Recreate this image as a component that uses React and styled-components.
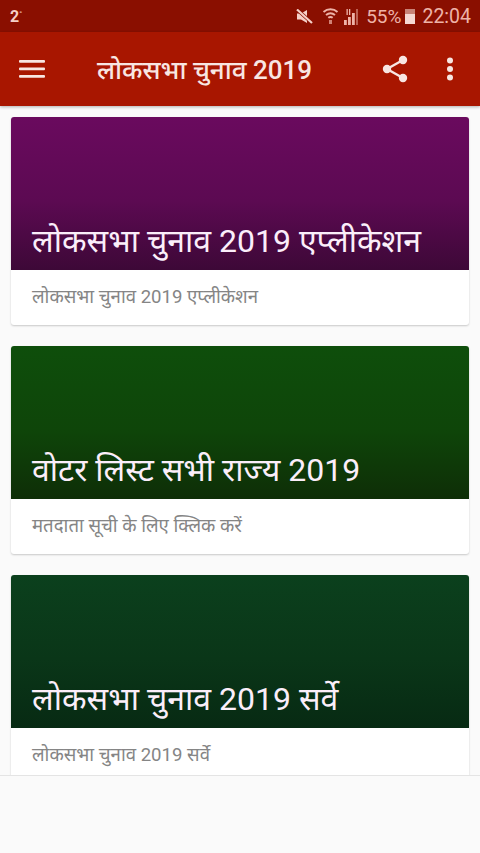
import React from 'react';
import styled, { createGlobalStyle } from 'styled-components';

const GlobalStyle = createGlobalStyle`
  html, body { margin: 0; padding: 0; background: #fafafa; }
  body { font-family: Roboto, "Noto Sans", "Noto Sans Devanagari", sans-serif; }
`;

const cards = [
  { title: 'लोकसभा चुनाव 2019 एप्लीकेशन', text: 'लोकसभा चुनाव 2019 एप्लीकेशन', top: '#6a0a5e', mid: '#5c0a52', bottom: '#3d0837' },
  { title: 'वोटर लिस्ट सभी राज्य 2019', text: 'मतदाता सूची के लिए क्लिक करें', top: '#0e4e0b', mid: '#0e4509', bottom: '#0e2e07' },
  { title: 'लोकसभा चुनाव 2019 सर्वे', text: 'लोकसभा चुनाव 2019 सर्वे', top: '#0b401d', mid: '#0a3618', bottom: '#072a13' },
];

const App = () => {
  return (
    <>
      <GlobalStyle />
      <Screen>
        <StatusBar>
          <Temp>2<sup>°</sup></Temp>
          <StatusRight>
            <svg width="17" height="15" viewBox="0 0 17 15">
              <path d="M1 4.500h4L11 1v13L5 10.500H1z" fill="#f5cfc7" />
              <path d="M1.500 1l14.500 13" stroke="#8a0f00" strokeWidth="3.400" />
              <path d="M1 0.500l15 13.500" stroke="#f5cfc7" strokeWidth="2.200" />
            </svg>
            <WifiIcon width="17" height="18" viewBox="0 0 17 18" fill="none" stroke="#eeb3a8" strokeWidth="1.900">
              <path d="M1.500 5c4-3.600 10-3.600 14 0" />
              <path d="M4 8c2.800-2.300 6.200-2.300 9 0" />
              <path d="M6.300 10.800c1.300-1 3.100-1 4.400 0" />
              <path d="M8.500 13v4" opacity=".7" strokeWidth="3" />
            </WifiIcon>
            <svg width="16" height="17" viewBox="0 0 16 17" fill="#eeb3a8">
              <rect x="1" y="12" width="2.800" height="5" />
              <rect x="5" y="9" width="2.800" height="8" />
              <rect x="9" y="5" width="2.800" height="12" />
              <rect x="13" y="1" width="2" height="16" opacity=".5" />
              <rect x="3.500" y="1" width="1.300" height="6" />
              <rect x="6" y="1" width="1.300" height="6" />
            </svg>
            <Percent>55%</Percent>
            <Battery />
            <Clock>22:04</Clock>
          </StatusRight>
        </StatusBar>
        <Toolbar>
          <IconSlot>
            <svg width="26" height="18" viewBox="0 0 26 18" fill="#f8e6e2">
              <rect y="0" width="26" height="2.800" rx="1" />
              <rect y="7.500" width="26" height="2.800" rx="1" />
              <rect y="15" width="26" height="2.800" rx="1" />
            </svg>
          </IconSlot>
          <Title>लोकसभा चुनाव 2019</Title>
          <ShareSlot>
            <svg width="26" height="28" viewBox="0 0 26 28" fill="#f8e6e2">
              <circle cx="21" cy="5" r="4.200" />
              <circle cx="5" cy="14" r="4.200" />
              <circle cx="21" cy="23" r="4.200" />
              <path d="M21 5L5 14l16 9" fill="none" stroke="#f8e6e2" strokeWidth="2.400" />
            </svg>
          </ShareSlot>
          <MoreSlot>
            <svg width="8" height="24" viewBox="0 0 8 24" fill="#f8e6e2">
              <circle cx="4" cy="3.500" r="3" />
              <circle cx="4" cy="12" r="3" />
              <circle cx="4" cy="20.500" r="3" />
            </svg>
          </MoreSlot>
        </Toolbar>
        <List>
          {cards.map((card) => (
            <Card key={card.title}>
              <Banner $top={card.top} $mid={card.mid} $bottom={card.bottom}>
                <BannerTitle>{card.title}</BannerTitle>
              </Banner>
              <CardText>{card.text}</CardText>
            </Card>
          ))}
        </List>
        <Footer />
      </Screen>
    </>
  );
};

export default App;

const Screen = styled.div`
  width: 480px;
  height: 853px;
  display: flex;
  flex-direction: column;
  overflow: hidden;
  background: #fafafa;
`;

const StatusBar = styled.div`
  height: 32px;
  flex: none;
  display: flex;
  align-items: center;
  justify-content: space-between;
  padding: 0 9px 0 10px;
  background: #8a0f00;
`;

const Temp = styled.span`
  font-size: 16px;
  font-weight: 700;
  color: #f5cfc7;
  sup { font-size: 8px; font-weight: 400; line-height: 0; }
`;

const StatusRight = styled.div`
  display: flex;
  align-items: center;
  gap: 4px;
  color: #eeb3a8;
`;

const WifiIcon = styled.svg`
  margin-left: 5px;
`;

const Percent = styled.span`
  margin-left: 3px;
  font-size: 19px;
`;

const Battery = styled.span`
  width: 10px;
  height: 15px;
  background: linear-gradient(#c98377 35%, #f6d9d3 35%);
`;

const Clock = styled.span`
  margin-left: 3px;
  font-size: 19.500px;
`;

const Toolbar = styled.div`
  height: 74px;
  flex: none;
  display: flex;
  align-items: center;
  background: #a81600;
  box-shadow: 0 1px 3px rgba(0, 0, 0, 0.3);
  position: relative;
  z-index: 1;
`;

const IconSlot = styled.div`
  width: 97px;
  padding-left: 19px;
  box-sizing: border-box;
  display: flex;
  align-items: center;
`;

const Title = styled.div`
  flex: 1;
  font-size: 26px;
  font-weight: 500;
  color: #f8e6e2;
`;

const ShareSlot = styled.div`
  display: flex;
  margin-right: 38px;
`;

const MoreSlot = styled.div`
  display: flex;
  margin-right: 26px;
`;

const List = styled.div`
  flex: 1;
  min-height: 0;
  overflow: hidden;
  display: flex;
  flex-direction: column;
  gap: 21px;
  padding: 11px 11px 0;
`;

const Card = styled.div`
  flex: none;
  background: #fff;
  border-radius: 3px;
  overflow: hidden;
  box-shadow: 0 1px 2px rgba(0, 0, 0, 0.2);
`;

const Banner = styled.div`
  height: 153px;
  box-sizing: border-box;
  display: flex;
  align-items: flex-end;
  padding: 0 21px 7px;
  background: linear-gradient(${(p) => p.$top}, ${(p) => p.$mid} 55%, ${(p) => p.$bottom});
`;

const BannerTitle = styled.div`
  font-size: 32px;
  line-height: 44px;
  color: #fbeefa;
  white-space: nowrap;
`;

const CardText = styled.div`
  height: 55px;
  box-sizing: border-box;
  padding: 15px 21px 0;
  font-size: 18.600px;
  line-height: 24px;
  color: #858585;
`;

const Footer = styled.div`
  height: 78px;
  flex: none;
  background: #fafafa;
  border-top: 1px solid #e4e4e4;
  box-sizing: border-box;
`;
